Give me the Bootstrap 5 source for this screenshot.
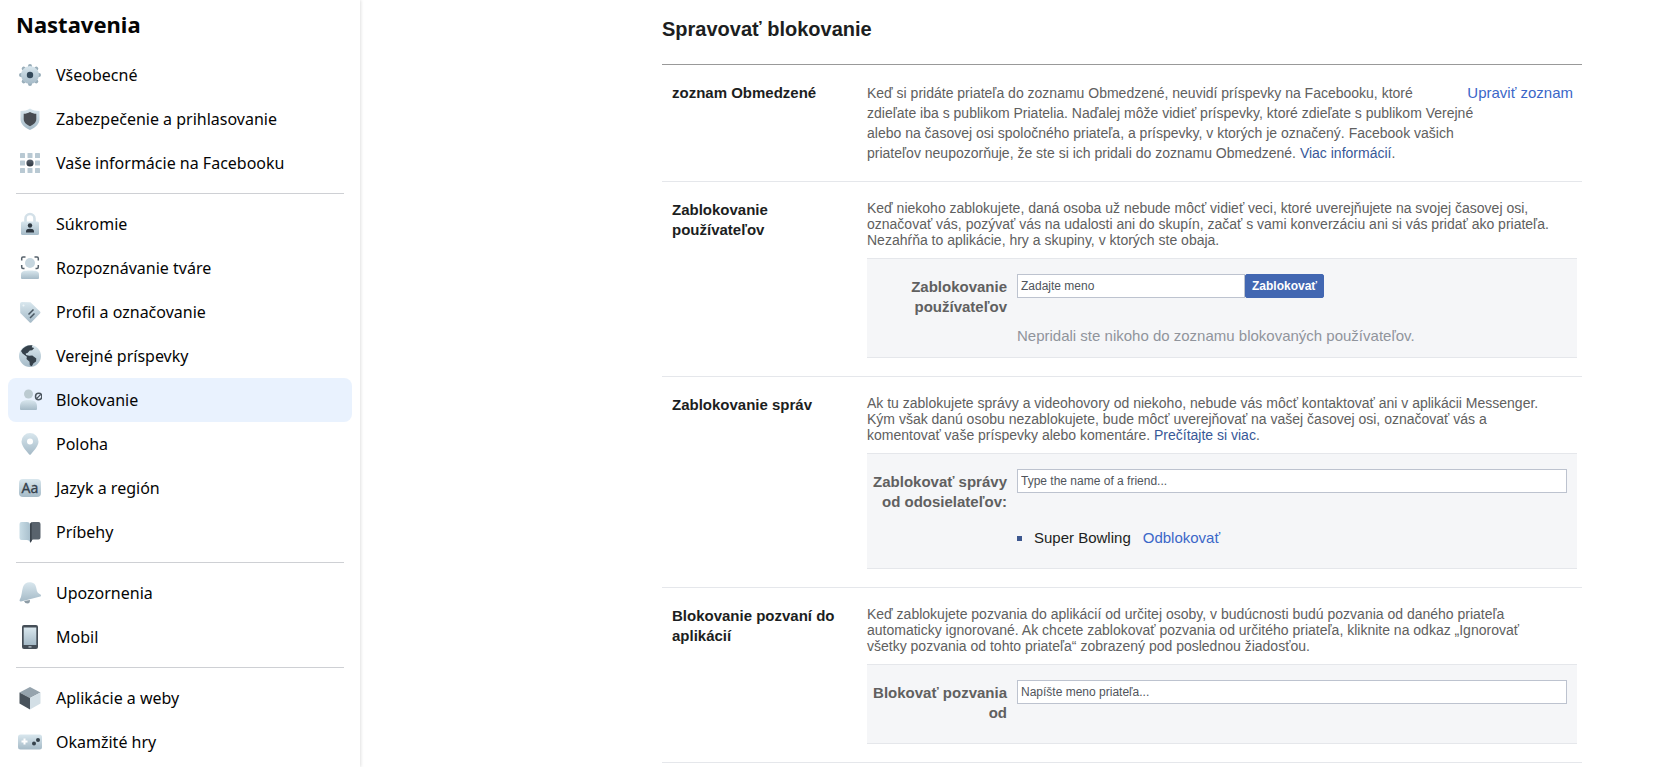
<!DOCTYPE html>
<html lang="sk">
<head>
<meta charset="utf-8">
<meta name="viewport" content="width=device-width, initial-scale=1">
<title>Nastavenia</title>
<link href="https://cdn.jsdelivr.net/npm/bootstrap@5.3.0/dist/css/bootstrap.min.css" rel="stylesheet">
<style>
  body { font-family: "Liberation Sans", Arial, sans-serif; font-size: 15px; line-height: 20px; color: #606060; background: #fff; }
  a { color: #385898; text-decoration: none; }
  .action-link { color: #3b67c8; }

  .side-panel { flex: 0 0 360px; padding: 10px 8px 0; box-shadow: 1px 0 3px rgba(0, 0, 0, .12); font-family: "Noto Sans", "Open Sans", sans-serif; }
  .side-title { font-size: 22px; line-height: 28px; font-weight: 700; color: #050505; margin: 0 0 15px; padding-left: 8px; }
  .side-link { display: flex; align-items: center; gap: 14px; height: 44px; padding: 0 10px; border-radius: 8px; font-size: 16px; color: #050505; }
  .side-link:hover { background: #f2f2f2; }
  .side-link.active, .side-link.active:hover { background: #e9f2fe; }
  .side-link svg { width: 24px; height: 24px; flex: none; }
  .side-rule { margin: 8px; border: 0; border-top: 1px solid #ced0d4; opacity: 1; }

  .page-main { padding-right: 92px; }
  .settings-col { max-width: 920px; margin-left: auto; }
  .page-title { font-size: 20px; line-height: 24px; font-weight: 700; color: #1c1e21; margin: 0; padding: 17px 0 23px; border-bottom: 1px solid #999; }
  .setting { display: flex; padding: 18px 5px 18px 10px; border-bottom: 1px solid #e5e7eb; }
  .setting-name { flex: 0 0 195px; padding-right: 20px; margin: 0; font-size: 15px; line-height: 20px; font-weight: 700; color: #1c1e21; }
  .intro { font-size: 14px; padding-right: 85px; }
  .tight { font-size: 14px; line-height: 16px; margin-bottom: 10px; padding-right: 16px; }
  .form-panel { background: #f5f6f8; border: solid #e5e7eb; border-width: 1px 0; padding: 15px 10px 20px 0; display: grid; grid-template-columns: 140px 1fr; column-gap: 10px; }
  .form-panel.with-note { padding-bottom: 11px; }
  .form-panel label { text-align: right; font-weight: 700; padding-top: 3px; }
  .form-panel .form-control { height: 24px; padding: 0 3px; border: 1px solid #bdc3cf; border-radius: 0; font-size: 12px; line-height: 20px; color: #444950; background: #fff; }
  .form-panel .form-control::placeholder { color: #50555c; opacity: 1; }
  .form-panel .name-box { max-width: 228px; }
  .block-btn { --bs-btn-bg: #4267b2; --bs-btn-border-color: #4267b2; height: 24px; padding: 0 6px; font-size: 12px; line-height: 20px; font-weight: 700; border-radius: 2px; }
  .empty-note { grid-column: 2; color: #90949c; margin: 9px 0 0; }
  .blocked-list { grid-column: 2; list-style: none; padding: 0; margin: 16px 0 0; color: #1c1e21; }
  .blocked-list li::before { content: ""; width: 5px; height: 5px; background: #3d578f; margin-right: 12px; }
</style>
</head>
<body>
<svg width="0" height="0" class="position-absolute" aria-hidden="true">
  <defs>
    <linearGradient id="pale" x1="0" y1="0" x2="0" y2="1"><stop offset="0" stop-color="#d9e7ee"/><stop offset="1" stop-color="#a5bac7"/></linearGradient>
    <linearGradient id="ink" x1="0" y1="0" x2="0" y2="1"><stop offset="0" stop-color="#5c6570"/><stop offset="1" stop-color="#2b333c"/></linearGradient>
    <linearGradient id="side" x1="0" y1="0" x2="1" y2="0"><stop offset="0" stop-color="#c9dde6"/><stop offset="1" stop-color="#a9c0cd"/></linearGradient>
  </defs>
</svg>

<div class="d-flex min-vh-100">
  <nav class="side-panel" aria-label="Nastavenia">
    <h1 class="side-title">Nastavenia</h1>
    <a class="side-link" href="#"><svg viewBox="0 0 24 24"><g fill="none" stroke="#98adb9" stroke-width="4" stroke-linecap="round"><path d="M12 3v18M3 12h18M5.700 5.700l12.600 12.600M18.300 5.700L5.700 18.300"/></g><circle cx="12" cy="12" r="9" fill="url(#pale)"/><circle cx="12" cy="12" r="3.200" fill="#34495a"/></svg>Všeobecné</a>
    <a class="side-link" href="#"><svg viewBox="0 0 24 24"><path d="M12 1.500c3 1.800 6 2.500 9.500 2.500v8c0 5-4 8.500-9.500 11C6.500 20.500 2.500 17 2.500 12V4C6 4 9 3.300 12 1.500z" fill="url(#pale)"/><path d="M12 5c2 1.200 4 1.700 6.300 1.800V12c0 3.300-2.500 5.500-6.300 7.300C8.200 17.500 5.700 15.300 5.700 12V6.800C8 6.700 10 6.200 12 5z" fill="#484c52"/></svg>Zabezpečenie a prihlasovanie</a>
    <a class="side-link" href="#"><svg viewBox="0 0 24 24"><g fill="#b9c9d3"><rect x="2" y="2" width="5" height="5" rx=".6"/><rect x="9.500" y="2" width="5" height="5" rx=".6"/><rect x="17" y="2" width="5" height="5" rx=".6"/><rect x="2" y="9.500" width="5" height="5" rx=".6"/><rect x="17" y="9.500" width="5" height="5" rx=".6"/><rect x="2" y="17" width="5" height="5" rx=".6"/><rect x="9.500" y="17" width="5" height="5" rx=".6"/><rect x="17" y="17" width="5" height="5" rx=".6"/></g><circle cx="12" cy="12" r="3.600" fill="url(#ink)"/></svg>Vaše informácie na Facebooku</a>
    <hr class="side-rule">
    <a class="side-link" href="#"><svg viewBox="0 0 24 24"><path d="M7.500 11V6.500a4.500 4.500 0 0 1 9 0V11" fill="none" stroke="#d3e0e8" stroke-width="2.600"/><rect x="3" y="9.500" width="18" height="13.500" rx="1.500" fill="url(#pale)"/><circle cx="12" cy="13.500" r="2.200" fill="#2f3942"/><path d="M8 20.500v-1.300c0-1.700 1.500-2.500 4-2.500s4 .8 4 2.500v1.300z" fill="#2f3942"/></svg>Súkromie</a>
    <a class="side-link" href="#"><svg viewBox="0 0 24 24"><circle cx="12" cy="7" r="5" fill="#c6d6df"/><path d="M3 22v-3.500C3 15 6 14.500 12 14.500s9 .5 9 4V22q0 1-1 1H4q-1 0-1-1z" fill="url(#pale)"/><path d="M3.700 4.500V2.300Q3.700 1 5 1h2.500M16.500 1H19q1.300 0 1.300 1.300v2.200M3.700 9v2q0 1.500 1.300 1.500h1.500M20.300 9v2q0 1.500-1.300 1.500h-1.500" fill="none" stroke="#56616b" stroke-width="1.500"/></svg>Rozpoznávanie tváre</a>
    <a class="side-link" href="#"><svg viewBox="0 0 24 24"><path d="M2 4q0-2 2-2l8.500.3L22 11.500q1 1 0 2l-8.500 8.700q-1 1-2 0L2.300 13z" fill="url(#pale)"/><circle cx="5.500" cy="5.500" r="1" fill="#eef4f7"/><path d="M10.500 14.500l5-5M12 18l4.500-4.500" stroke="#485661" stroke-width="1.500"/></svg>Profil a označovanie</a>
    <a class="side-link" href="#"><svg viewBox="0 0 24 24"><circle cx="12" cy="12" r="11" fill="url(#pale)"/><path d="M3 7C5.500 2.500 10 .7 14.500 1.300l-.8 1.900 2.500.8-2 2.300-2.400.2-2.300 2.500-1.800.4.400 1.700 3 .7 3.200-.4 4 3.200-.3 3-2.500 1.600-1.700 3-2-.9-.3-3.600-3-2.700.4-2.300L4.500 9.500z" fill="#35414b"/></svg>Verejné príspevky</a>
    <a class="side-link active" href="#" aria-current="page"><svg viewBox="0 0 24 24"><circle cx="10.500" cy="6" r="4.500" fill="#bccbd1"/><path d="M2 21v-3c0-4.500 3.500-6 8.500-6s8.500 1.500 8.500 6v3q0 1-1 1H3q-1 0-1-1z" fill="url(#pale)"/><circle cx="20.700" cy="8.500" r="3.200" fill="#e9f2fe" stroke="#4b555e" stroke-width="1.500"/><path d="M18.600 10.600l4.200-4.200" stroke="#4b555e" stroke-width="1.300"/></svg>Blokovanie</a>
    <a class="side-link" href="#"><svg viewBox="0 0 24 24"><path fill-rule="evenodd" d="M12 1a8.500 8.500 0 0 1 8.500 8.500c0 4.500-4.500 9-7.500 12.800q-1 1-2 0C8 18.500 3.500 14 3.500 9.500A8.500 8.500 0 0 1 12 1zm0 5.500a3 3 0 1 0 0 6 3 3 0 0 0 0-6z" fill="url(#pale)"/></svg>Poloha</a>
    <a class="side-link" href="#"><svg viewBox="0 0 24 24"><rect x="1" y="3" width="22" height="18" rx="4" fill="url(#pale)"/><text x="12" y="17" text-anchor="middle" font-family="Noto Sans, sans-serif" font-size="14" fill="#34414c" stroke="#34414c" stroke-width=".3">Aa</text></svg>Jazyk a región</a>
    <a class="side-link" href="#"><svg viewBox="0 0 24 24"><path d="M1.500 4q0-2 2-2H9q3 0 3 3v17q-1-2-3-2H3.500q-2 0-2-2z" fill="url(#side)"/><path d="M12 5q0-3 3-3h5.500q2 0 2 2v13.500q0 2-2 2H15q-1.300 0-1.300 1.500L12 22.800z" fill="#59636d"/><path d="M12 5q0-2 1.700-2.700V21L12 22.800z" fill="#3b444d"/></svg>Príbehy</a>
    <hr class="side-rule">
    <a class="side-link" href="#"><svg viewBox="0 0 24 24"><path d="M6 20l6-1q0 3.500-2.500 3.500T6 20z" fill="#8d9ca6"/><path d="M5 6C6 2.500 9 .8 12.500 1.200 16.500 1.800 18 4 18.500 8c.4 3 1.500 4.200 4 5.500.9.500.7 1.700-.2 2L3 20.500c-1 .2-1.800-.7-1.300-1.700C4 15 3.500 11 5 6z" fill="url(#pale)"/></svg>Upozornenia</a>
    <a class="side-link" href="#"><svg viewBox="0 0 24 24"><rect x="4" y="0" width="16" height="24" rx="2" fill="#454e57"/><rect x="5.700" y="2.500" width="12.600" height="17.500" fill="url(#pale)"/><rect x="10.500" y="21.300" width="3" height="1.200" fill="#c4ced5"/></svg>Mobil</a>
    <hr class="side-rule">
    <a class="side-link" href="#"><svg viewBox="0 0 24 24"><path d="M12 1l10.500 5.500L12 12 1.500 6.500z" fill="#95a3ad"/><path d="M1.500 6.500L12 12v11.500L1.500 17.500z" fill="#48525b"/><path d="M22.500 6.500L12 12v11.500l10.500-6z" fill="#d3dfe6"/></svg>Aplikácie a weby</a>
    <a class="side-link" href="#"><svg viewBox="0 0 24 24"><rect x="0" y="4.500" width="24" height="15" rx="2.500" fill="url(#pale)"/><path d="M6.500 8.500v6M3.500 11.500h6" stroke="#fff" stroke-width="2"/><circle cx="16" cy="13.500" r="2" fill="#35414b"/><circle cx="20" cy="10" r="2" fill="#35414b"/></svg>Okamžité hry</a>
  </nav>

  <main class="page-main flex-grow-1">
    <div class="settings-col">
      <h2 class="page-title">Spravovať blokovanie</h2>

      <section class="setting">
        <h3 class="setting-name">zoznam Obmedzené</h3>
        <div class="flex-grow-1">
          <a class="action-link float-end ms-4 me-1" href="#">Upraviť zoznam</a>
          <p class="intro mb-0">Keď si pridáte priateľa do zoznamu Obmedzené, neuvidí príspevky na Facebooku, ktoré zdieľate iba s publikom Priatelia. Naďalej môže vidieť príspevky, ktoré zdieľate s publikom Verejné alebo na časovej osi spoločného priateľa, a príspevky, v ktorých je označený. Facebook vašich priateľov neupozorňuje, že ste si ich pridali do zoznamu Obmedzené. <a href="#">Viac informácií</a>.</p>
        </div>
      </section>

      <section class="setting">
        <h3 class="setting-name">Zablokovanie používateľov</h3>
        <div class="flex-grow-1">
          <p class="tight">Keď niekoho zablokujete, daná osoba už nebude môcť vidieť veci, ktoré uverejňujete na svojej časovej osi, označovať vás, pozývať vás na udalosti ani do skupín, začať s vami konverzáciu ani si vás pridať ako priateľa. Nezahŕňa to aplikácie, hry a skupiny, v ktorých ste obaja.</p>
          <form class="form-panel with-note">
            <label for="block-user">Zablokovanie používateľov</label>
            <div class="d-flex">
              <input class="form-control name-box" id="block-user" type="text" placeholder="Zadajte meno">
              <button class="btn btn-primary block-btn" type="button">Zablokovať</button>
            </div>
            <p class="empty-note">Nepridali ste nikoho do zoznamu blokovaných používateľov.</p>
          </form>
        </div>
      </section>

      <section class="setting">
        <h3 class="setting-name">Zablokovanie správ</h3>
        <div class="flex-grow-1">
          <p class="tight">Ak tu zablokujete správy a videohovory od niekoho, nebude vás môcť kontaktovať ani v aplikácii Messenger. Kým však danú osobu nezablokujete, bude môcť uverejňovať na vašej časovej osi, označovať vás a komentovať vaše príspevky alebo komentáre. <a href="#">Prečítajte si viac</a>.</p>
          <form class="form-panel">
            <label for="block-msg">Zablokovať správy od odosielateľov:</label>
            <div><input class="form-control" id="block-msg" type="text" placeholder="Type the name of a friend..."></div>
            <ul class="blocked-list">
              <li class="d-flex align-items-center">Super Bowling <a class="action-link ms-2 ps-1" href="#">Odblokovať</a></li>
            </ul>
          </form>
        </div>
      </section>

      <section class="setting">
        <h3 class="setting-name">Blokovanie pozvaní do aplikácií</h3>
        <div class="flex-grow-1">
          <p class="tight">Keď zablokujete pozvania do aplikácií od určitej osoby, v budúcnosti budú pozvania od daného priateľa automaticky ignorované. Ak chcete zablokovať pozvania od určitého priateľa, kliknite na odkaz „Ignorovať všetky pozvania od tohto priateľa“ zobrazený pod poslednou žiadosťou.</p>
          <form class="form-panel">
            <label for="block-inv">Blokovať pozvania od</label>
            <div><input class="form-control" id="block-inv" type="text" placeholder="Napíšte meno priateľa..."></div>
          </form>
        </div>
      </section>
    </div>
  </main>
</div>
<script src="https://cdn.jsdelivr.net/npm/bootstrap@5.3.0/dist/js/bootstrap.bundle.min.js"></script>
</body>
</html>
